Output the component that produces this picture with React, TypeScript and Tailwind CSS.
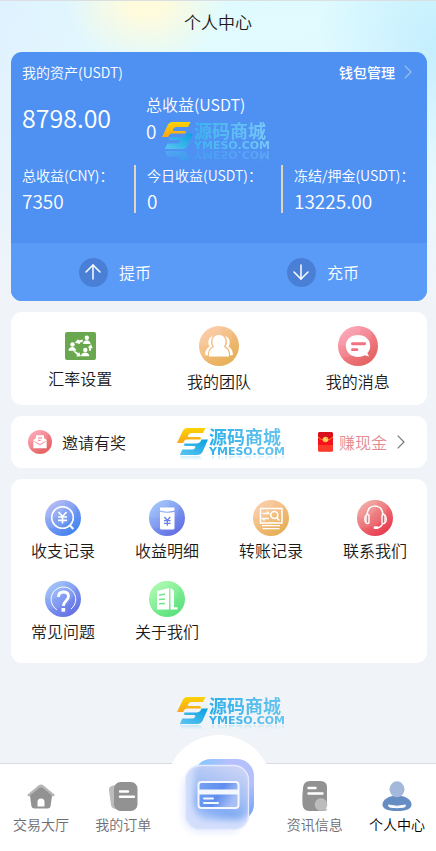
import React from 'react';
import { ArrowDown, ArrowUp } from 'lucide-react';
import clsx from 'clsx';

type Tone = { from: string; to: string };

const tones: Record<string, Tone> = {
  orange: { from: '#fcc49a', to: '#e6b057' },
  pink: { from: '#fd97ac', to: '#e3625f' },
  violet: { from: '#a5aef5', to: '#4283f0' },
  indigo: { from: '#8fb9fb', to: '#6470e4' },
  red: { from: '#ef9c96', to: '#e83a4e' },
  green: { from: '#9bfaa0', to: '#5ce080' },
};

// Round gradient badge, the glyph is drawn on a 36x36 grid
function Disc({ id, tone, className, children }: { id: string; tone: string; className: string; children: React.ReactNode }) {
  return (
    <svg viewBox="0 0 36 36" className={className} fill="none" aria-hidden="true">
      <defs>
        <linearGradient id={id} x1="0.15" y1="0.1" x2="0.75" y2="0.95">
          <stop offset="0" stopColor={tones[tone].from} />
          <stop offset="1" stopColor={tones[tone].to} />
        </linearGradient>
        <clipPath id={`${id}-clip`}>
          <circle cx="18" cy="18" r="18" />
        </clipPath>
      </defs>
      <circle cx="18" cy="18" r="18" fill={`url(#${id})`} />
      <g clipPath={`url(#${id}-clip)`} fill="#fff">
        <circle cx="6" cy="4" r="14" fillOpacity="0.08" />
        <circle cx="8" cy="6" r="22" fillOpacity="0.08" />
      </g>
      {children}
    </svg>
  );
}

function Chevron({ className }: { className: string }) {
  return (
    <svg viewBox="0 0 8 14" className={clsx('h-[14px] w-2', className)} fill="none" aria-hidden="true">
      <path d="M0.700 0.700L7 7l-6.300 6.300" stroke="currentColor" strokeWidth="1.200" />
    </svg>
  );
}

function RateIcon() {
  return (
    <svg viewBox="0 0 31 28" className="h-7 w-[31px]" aria-hidden="true">
      <rect width="31" height="28" rx="2" fill="#69a84f" />
      <g fill="#fff">
        <circle cx="21.800" cy="5.800" r="2.200" />
        <path d="M18 12c0-5 7.500-5 7.500 0z" />
        <circle cx="7.500" cy="12.500" r="2.200" />
        <path d="M3.500 18.800c0-5 7.500-5 7.500 0z" />
        <circle cx="20.300" cy="18" r="2.200" />
        <path d="M16 24.300c0-5 8.300-5 8.300 0z" />
        <path d="M9.800 10.800l3.200-3.600 1 1.200 3.700-.8v2.300l-3 .6.500 1.400zM8 19l3 .5 2.500 1.800.9-1.100 1.400 4-4.600.2 1-1.300zM23.800 18.500l.5-2.600-1.500-.3 3.200-3.400 1.700 4-1.400-.1-.6 2.900z" />
      </g>
    </svg>
  );
}

function TeamGlyph() {
  return (
    <g fill="#fff">
      <path d="M5.500 26c0-4 1.500-6 4-7.300-2-3-1.300-9 3-9.200-2.500 3-2 7-.5 9-2.600 1.200-4 4-4 8z" />
      <path d="M30.500 26c0-4-1.500-6-4-7.300 2-3 1.300-9-3-9.200 2.500 3 2 7 .5 9 2.600 1.200 4 4 4 8z" />
      <path d="M9 27.500c-.3-5 1.500-7.500 4.800-8.700-3-3.300-2-10.800 4.200-10.800s7.200 7.500 4.200 10.800c3.300 1.200 5.100 3.700 4.800 8.700z" />
    </g>
  );
}

function MessageGlyph() {
  return (
    <>
      <path d="M18 8c6.500 0 11 4.300 11 9.800 0 2.700-.9 4.900-2.600 6.600l1.600 3.100-4-1.200c-1.700.9-3.700 1.500-6 1.500-6.500 0-11-4.400-11-10S11.500 8 18 8z" fill="#fff" />
      <path d="M13 16h11M13 21.300h4" stroke="#f07382" strokeWidth="2.600" strokeLinecap="round" />
    </>
  );
}

function InviteGlyph() {
  return (
    <>
      <path d="M8 15l4-3v6l6 4 6-4v-6l4 3v12.500H8z" fill="#fff" />
      <path d="M12 8h12v9.500l-6 4-6-4z" fill="#fff" />
      <path d="M15 12h6M15 15.500h4" stroke="#f0788a" strokeWidth="1.500" />
      <path d="M8.500 16.500l9.500 6 9.500-6" stroke="#f0788a" strokeWidth="1" />
    </>
  );
}

function RecordGlyph() {
  return (
    <>
      <circle cx="17.500" cy="17.500" r="10.800" stroke="#fff" strokeWidth="1.500" />
      <path d="M24.500 25l3.800 4" stroke="#fff" strokeWidth="2" />
      <path d="M13.500 12l4 4.500 4-4.500M17.500 16.500v7M13 17h9M13 20.300h9" stroke="#fff" strokeWidth="1.700" />
    </>
  );
}

function IncomeGlyph() {
  return (
    <>
      <path d="M11 7.500h14.500v3c-4.500 1.500-10 1.500-14.500 0z" fill="#fff" />
      <path d="M11 11.700c4.500 1.500 10 1.500 14.500 0V28q0 1.500-1.500 1.500H12.500Q11 29.500 11 28z" fill="#fff" />
      <path d="M15.300 17l3 3.300 3-3.300M18.300 20.300v5.500M15 20.700h6.600M15 23.300h6.600" stroke="#6b80e8" strokeWidth="1.300" />
    </>
  );
}

function TransferGlyph() {
  return (
    <>
      <path d="M7.500 8.500h21.500V23H7.500z" stroke="#fff" strokeWidth="1.500" />
      <path d="M9.500 13.500h6.500l-2-2M16 18.500H9.500l2 2" stroke="#fff" strokeWidth="1.400" />
      <circle cx="21.300" cy="15" r="3.500" stroke="#fff" strokeWidth="1.600" />
      <path d="M23.700 17.500l2.500 3" stroke="#fff" strokeWidth="1.700" />
      <path d="M9 25.700h18M9.500 28.700h17" stroke="#fff" strokeWidth="1.200" />
    </>
  );
}

function SupportGlyph() {
  return (
    <>
      <path d="M10 15c.3-5.500 3.500-9 8-9s7.700 3.500 8 9" stroke="#fff" strokeWidth="1.700" />
      <rect x="9" y="14.500" width="3" height="9" rx="1.200" stroke="#fff" strokeWidth="1.400" />
      <rect x="25" y="14.500" width="3" height="9" rx="1.200" stroke="#fff" strokeWidth="1.400" />
      <path d="M9 15.500c-1.600.8-2 6 0 7M28 15.500c1.600.8 2 6 0 7" stroke="#fff" strokeWidth="1.200" />
      <path d="M25.500 23.500c-.8 2.700-3 4.300-6 4.500" stroke="#fff" strokeWidth="1.400" />
      <rect x="16.500" y="26.300" width="5" height="2.800" rx="1.400" fill="#fff" />
    </>
  );
}

function HelpGlyph() {
  return (
    <>
      <path d="M12 28.800A12.300 12.300 0 1 1 26 28" stroke="#fff" strokeWidth="1" />
      <path d="M13.500 16c0-3.500 2-5 5-5s5 1.700 5 4.500c0 4-5 4-5 9.500" stroke="#fff" strokeWidth="2.800" />
      <path d="M16.500 27h3.700v3.700h-3.700z" fill="#fff" />
    </>
  );
}

function AboutGlyph() {
  return (
    <>
      <path d="M8 10l12-3v21.500H8z" fill="#fff" />
      <path d="M21.500 7l3.500 2.500v16.800h3.500v2.200h-7z" fill="#fff" />
      <path d="M10 14.300l6-1.300M10 18.600l6-.6M10 22.800l6-.3" stroke="#6ee68a" strokeWidth="1.500" />
    </>
  );
}

function RedPacket() {
  return (
    <svg viewBox="0 0 17 20" className="h-5 w-[17px]" aria-hidden="true">
      <rect x="1" y="0.500" width="15" height="19" rx="1.500" fill="#f5121c" />
      <path d="M1 13h15v5q0 1.500-1.500 1.500h-12Q1 19.500 1 18z" fill="#fb3a2a" />
      <path d="M1 1.500Q1 0 2.500 0h12Q16 0 16 1.500V5q-7.500 7-15 0z" fill="#d9101c" />
      <path d="M1 5q7.500 7 15 0" fill="none" stroke="#f8a03a" strokeWidth="0.800" />
      <circle cx="8.500" cy="7.500" r="2.800" fill="#fbc14a" />
      <path d="M7.300 6.500l2.200 2" stroke="#fff2c0" strokeWidth="0.900" />
    </svg>
  );
}

// Shop logo with its mirrored lower edge
function ShopMark({ id, className, onBlue = false }: { id: string; className: string; onBlue?: boolean }) {
  return (
    <svg
      viewBox="0 0 110 28"
      className={clsx(
        'pointer-events-none absolute h-7 w-[110px] overflow-visible font-bold',
        onBlue
          ? '[-webkit-box-reflect:below_0px_linear-gradient(transparent_62%,rgba(255,255,255,0.400)_64%)]'
          : '[-webkit-box-reflect:below_-1px_linear-gradient(transparent_80%,rgba(255,255,255,0.300))]',
        className
      )}
    >
      <defs>
        <linearGradient id={`${id}-y`} x1="0" y1="0" x2="0" y2="1">
          <stop offset="0" stopColor="#fcd303" />
          <stop offset="1" stopColor="#f9a51a" />
        </linearGradient>
        <linearGradient id={`${id}-b`} x1="1" y1="0" x2="0" y2="1">
          <stop offset="0" stopColor="#0a9fe0" />
          <stop offset="1" stopColor="#5cc6f2" />
        </linearGradient>
        <linearGradient id={`${id}-t`} x1="0" y1="0" x2="1" y2="0">
          <stop offset="0" stopColor={onBlue ? '#3bb2ee' : '#2fb0ea'} />
          <stop offset="1" stopColor={onBlue ? '#78c6f8' : '#68c4ee'} />
        </linearGradient>
      </defs>
      <path d="M0 15L6 2.500Q7.200 0 10 0H28.500L26 5H14Q12 5 11 7.500 10.300 9 12 9H22.500Q24.500 9 23.500 11.500H10Q7 11.500 6.300 15z" fill={`url(#${id}-y)`} />
      <path d="M24.500 11.500H31L25.700 23.500Q24 27 20 27H2.800L5.300 21.500H15.500Q17.500 21.500 18.300 19.500 19 18 17 18H8Q6.500 18 7.300 15.500H20Q23.500 15 24.500 11.500z" fill={`url(#${id}-b)`} />
      <text x="32" y="16" fontSize="18" fontFamily="Liberation Sans, Noto Sans CJK SC, sans-serif" fill={`url(#${id}-t)`}>源码商城</text>
      <text x="32" y="27" fontSize="11" fontFamily="DejaVu Sans, sans-serif" fill={`url(#${id}-t)`}>YMESO.COM</text>
    </svg>
  );
}

const stats = [
  { label: '总收益(CNY)：', value: '7350' },
  { label: '今日收益(USDT)：', value: '0' },
  { label: '冻结/押金(USDT)：', value: '13225.00' },
];

const services = [
  { label: '收支记录', tone: 'violet', glyph: <RecordGlyph /> },
  { label: '收益明细', tone: 'indigo', glyph: <IncomeGlyph /> },
  { label: '转账记录', tone: 'orange', glyph: <TransferGlyph /> },
  { label: '联系我们', tone: 'red', glyph: <SupportGlyph /> },
  { label: '常见问题', tone: 'indigo', glyph: <HelpGlyph /> },
  { label: '关于我们', tone: 'green', glyph: <AboutGlyph /> },
];

function HomeIcon() {
  return (
    <svg viewBox="0 0 30 30" className="size-[30px]" aria-hidden="true">
      <path d="M1 14L12.500 4.500Q15 2.700 17.500 4.500L29 14l-1.500 1.300H2.500z" fill="#b5b5b5" />
      <path d="M4 14.500L13 7.200q2-1.500 4 0l9 7.300-1.300 10Q24.300 27.500 21.500 27.500h-13Q5.700 27.500 5.300 24.500z" fill="#929292" />
      <path d="M11.500 25.500V21q0-3.500 3.500-3.500t3.500 3.500v4.500z" fill="#fff" />
    </svg>
  );
}

function OrderIcon() {
  return (
    <svg viewBox="0 0 30 30" className="size-[30px]" aria-hidden="true">
      <path d="M9 4Q0 4.500 1 9l2 15q.7 4.500 7 4z" fill="#bcbcbc" />
      <rect x="6" y="1" width="23.500" height="29" rx="6.500" fill="#929292" />
      <path d="M12 10.500h8M12 15.700h14" stroke="#fff" strokeWidth="2.400" strokeLinecap="round" />
    </svg>
  );
}

function NewsIcon() {
  return (
    <svg viewBox="0 0 30 30" className="size-[30px]" aria-hidden="true">
      <path d="M10 0h10.500Q27 0 27 6.500V24l-3 6H9Q3 30 2.500 23.500 2 14 3 7 3.500 0 10 0z" fill="#929292" />
      <path d="M8.500 7h7M8.500 12.500h14" stroke="#fff" strokeWidth="2.400" strokeLinecap="round" />
      <circle cx="21" cy="23.500" r="6.300" fill="#bcbcbc" />
      <path d="M24.500 28l2 1.500" stroke="#bcbcbc" strokeWidth="2.500" />
    </svg>
  );
}

function UserIcon() {
  return (
    <svg viewBox="0 0 30 30" className="size-[30px]" aria-hidden="true">
      <path d="M15 14.500c8 0 14.500 4 14.500 9 0 4-4 6.500-14.500 6.500S.500 27.500.500 23.500c0-5 6.500-9 14.500-9z" fill="#668cc4" />
      <ellipse cx="15" cy="8.300" rx="7.500" ry="8" fill="#a3b8da" />
      <path d="M6.500 24q8.500 2.500 17 0l-.8 2q-7.700 1.500-15.400 0z" fill="#fff" stroke="#fff" strokeLinejoin="round" />
    </svg>
  );
}

function CardIcon() {
  return (
    <svg viewBox="0 0 84 84" className="size-21" fill="none" aria-hidden="true">
      <defs>
        <linearGradient id="card-back" x1="0" y1="0.300" x2="1" y2="0.300">
          <stop offset="0" stopColor="#7cc8ff" />
          <stop offset="0.600" stopColor="#b7bfff" />
          <stop offset="1" stopColor="#b3c1fc" />
        </linearGradient>
        <linearGradient id="card-back-low" x1="0" y1="0" x2="0" y2="1">
          <stop offset="0.400" stopColor="#6a9cf3" stopOpacity="0" />
          <stop offset="1" stopColor="#6a9cf3" />
        </linearGradient>
        <linearGradient id="card-glass" x1="0.700" y1="0" x2="0.300" y2="1">
          <stop offset="0" stopColor="#d0d6f6" />
          <stop offset="0.500" stopColor="#a5c0f4" />
          <stop offset="0.820" stopColor="#7faaf2" />
          <stop offset="1" stopColor="#a9c4f8" />
        </linearGradient>
        <linearGradient id="card-face" x1="0" y1="0" x2="1" y2="0.400">
          <stop offset="0" stopColor="#77a4f0" />
          <stop offset="0.600" stopColor="#5f8dee" />
          <stop offset="1" stopColor="#a9bff4" />
        </linearGradient>
        <filter id="card-glow" x="-30%" y="-30%" width="160%" height="160%">
          <feGaussianBlur stdDeviation="5" />
        </filter>
        <filter id="card-soft" x="-30%" y="-30%" width="160%" height="160%">
          <feGaussianBlur stdDeviation="3" />
        </filter>
        <clipPath id="card-clip">
          <rect x="8" y="12" width="64" height="65" rx="15" />
        </clipPath>
      </defs>
      <rect x="7" y="20" width="60" height="58" rx="16" fill="#dfe5ff" filter="url(#card-glow)" />
      <rect x="17" y="6" width="60" height="62" rx="17" fill="url(#card-back)" />
      <rect x="17" y="6" width="60" height="62" rx="17" fill="url(#card-back-low)" />
      <g clipPath="url(#card-clip)">
        <rect x="8" y="12" width="64" height="65" fill="#d3defb" />
        <rect x="17" y="8" width="56" height="59" rx="14" fill="url(#card-glass)" filter="url(#card-soft)" />
      </g>
      <rect x="8.500" y="12.500" width="63" height="64" rx="15" stroke="#e5ebff" strokeWidth="1.300" />
      <rect x="21.500" y="29" width="40" height="26" rx="3" fill="url(#card-face)" stroke="#f4f7ff" strokeWidth="2" />
      <path d="M22 39h39" stroke="#f4f7ff" strokeWidth="5" />
      <path d="M27 45.500h9M27 50h14" stroke="#f4f7ff" strokeWidth="2" strokeLinecap="round" />
    </svg>
  );
}

function NavItem({ label, icon, active = false }: { label: string; icon: React.ReactNode; active?: boolean }) {
  return (
    <a href="#" className={clsx('flex flex-3 flex-col items-center gap-[3px] pt-[17px] text-sm', active ? 'text-black' : 'text-[#6e6e73]')}>
      {icon}
      {label}
    </a>
  );
}

export default function App() {
  return (
    <div className="relative min-h-screen bg-[#f0f4f8] bg-[radial-gradient(ellipse_80px_60px_at_146px_4px,#fffbdc_20%,transparent),radial-gradient(ellipse_120px_130px_at_100%_50px,#c0eeff,transparent),linear-gradient(to_right,#dff2ff,#e0fbfe_35%,#dffaff)] bg-no-repeat font-['Noto_Sans_CJK_SC',sans-serif] font-[350] text-[#1a1a1a]">
      <div className="border-t border-[#dcdfe2] bg-linear-to-b from-transparent from-0% via-[#f0f4f8]/30 via-[150px] to-[#f0f4f8] to-[300px]">
        <header className="flex h-[51px] justify-center pt-2">
          <h1 className="text-[17px] leading-[26px]">个人中心</h1>
        </header>

        <main className="relative flex min-h-[799px] flex-col gap-[11px] pr-[9px] pb-[100px] pl-[11px] [&_section]:relative">
          <section className="overflow-hidden rounded-[11px] bg-[#4f91f3] text-white">
            <div className="flex items-center justify-between pt-[10px] pr-[15px] pl-[11px] text-sm">
              <span>我的资产(USDT)</span>
              <a href="#" className="flex items-center gap-[9px] font-medium">
                钱包管理
                <Chevron className="text-[#a3bfe8]" />
              </a>
            </div>

            <div className="mt-[9px] grid grid-cols-[125fr_291fr] items-center">
              <div className="pl-[11px] text-[25px]">8798.00</div>
              <div className="pl-[10px]">
                <div className="text-base leading-[26px]">总收益(USDT)</div>
                <div className="text-[19px] leading-7">0</div>
              </div>
            </div>

            <div className="mt-5 grid h-[78px] grid-cols-[125fr_147fr_144fr]">
              {stats.map((stat, idx) => (
                <div key={stat.label} className={clsx('h-12 pl-[11px] whitespace-nowrap', idx < 2 && 'border-r-2 border-[#e3d5c3]')}>
                  <div className="text-sm leading-5">{stat.label}</div>
                  <div className="text-[19px] leading-8">{stat.value}</div>
                </div>
              ))}
            </div>

            <div className="grid h-[58px] grid-cols-2 bg-[#5b9bf8] text-base">
              <button className="flex items-center justify-center gap-[11px]">
                <span className="flex size-[29px] items-center justify-center rounded-full bg-[#4a7fd6]">
                  <ArrowUp size={24} strokeWidth={1.500} />
                </span>
                提币
              </button>
              <button className="flex items-center justify-center gap-[11px]">
                <span className="flex size-[29px] items-center justify-center rounded-full bg-[#4a7fd6]">
                  <ArrowDown size={24} strokeWidth={1.500} />
                </span>
                充币
              </button>
            </div>
            <ShopMark id="mark-a" onBlue className="top-[70px] left-[151px]" />
          </section>

          <section className="grid grid-cols-3 items-center rounded-[11px] bg-white pt-[14px] pb-[12px]">
            <a href="#" className="flex flex-col items-center gap-[3px]">
              <span className="flex h-[34px] items-center">
                <RateIcon />
              </span>
              汇率设置
            </a>
            <a href="#" className="flex flex-col items-center gap-[3px]">
              <Disc id="team" tone="orange" className="size-10">
                <TeamGlyph />
              </Disc>
              我的团队
            </a>
            <a href="#" className="flex flex-col items-center gap-[3px]">
              <Disc id="message" tone="pink" className="size-10">
                <MessageGlyph />
              </Disc>
              我的消息
            </a>
          </section>

          <section className="rounded-[11px] bg-white">
            <a href="#" className="flex h-[52px] items-center pr-[22px] pl-[17px]">
              <Disc id="invite" tone="pink" className="size-6">
                <InviteGlyph />
              </Disc>
              <span className="ml-[10px]">邀请有奖</span>
              <span className="ml-auto flex items-center gap-[5px] text-[#e28a92]">
                <RedPacket />
                赚现金
                <Chevron className="ml-[5px] text-[#777]" />
              </span>
            </a>
            <ShopMark id="mark-b" className="top-3 left-[166px]" />
          </section>

          <section className="grid grid-cols-4 gap-y-[19px] rounded-[11px] bg-white pt-[21px] pb-[20px]">
            {services.map((item, idx) => (
              <a key={item.label} href="#" className="flex flex-col items-center gap-[2px]">
                <Disc id={`service-${idx}`} tone={item.tone} className="size-9">
                  {item.glyph}
                </Disc>
                {item.label}
              </a>
            ))}
          </section>

          <div className="relative">
            <ShopMark id="mark-c" className="top-[23px] left-[166px]" />
          </div>
        </main>
      </div>

      <nav className="fixed -right-0.5 bottom-0 left-0 flex h-[88px] border-t border-[#dadde0] bg-white">
        <NavItem label="交易大厅" icon={<HomeIcon />} />
        <NavItem label="我的订单" icon={<OrderIcon />} />
        <div className="relative flex flex-4 justify-center">
          <button aria-label="钱包" className="absolute -top-[29px] flex size-[106px] justify-center rounded-full bg-white pt-[18px]">
            <CardIcon />
          </button>
        </div>
        <NavItem label="资讯信息" icon={<NewsIcon />} />
        <NavItem label="个人中心" icon={<UserIcon />} active />
      </nav>
    </div>
  );
}
